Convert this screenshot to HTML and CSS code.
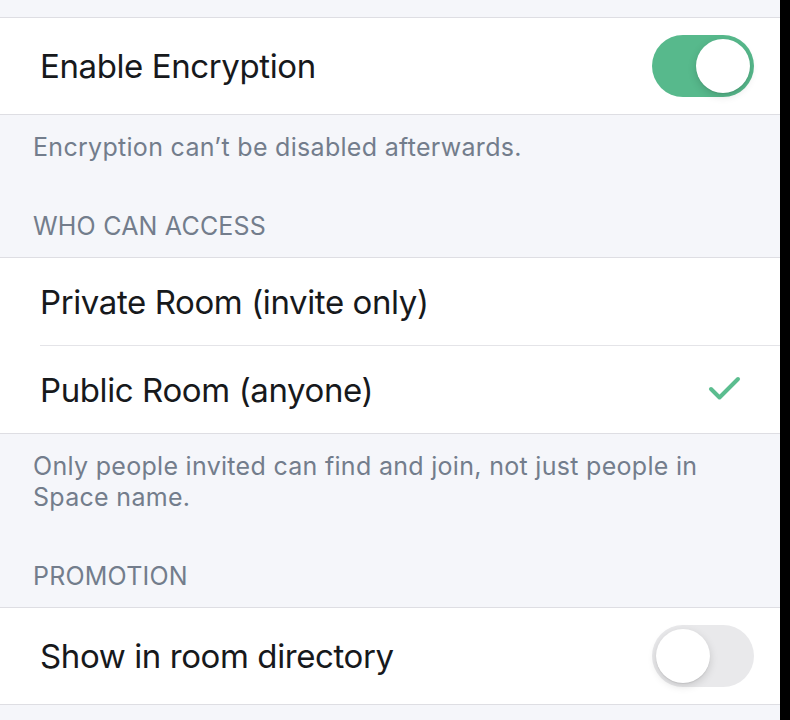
FILE: index.html
```html
<!DOCTYPE html>
<html>
<head>
<meta charset="utf-8">
<link rel="stylesheet" href="styles.css">
</head>
<body>
<div class="page">
  <div class="top-gap"></div>
  <section class="group">
    <div class="row row-tall">
      <span class="label">Enable Encryption</span>
      <span class="switch on"><span class="knob"></span></span>
    </div>
  </section>
  <p class="footer">Encryption can’t be disabled afterwards.</p>
  <h2 class="header">WHO CAN ACCESS</h2>
  <section class="group">
    <div class="row row-short">
      <span class="label">Private Room (invite only)</span>
    </div>
    <div class="sep"></div>
    <div class="row row-short">
      <span class="label">Public Room (anyone)</span>
      <svg class="check" width="34" height="28" viewBox="0 0 34 28"><path d="M3 13 L11.5 21.5 L30 3" fill="none" stroke="#5bbd8f" stroke-width="4" stroke-linecap="round" stroke-linejoin="round"/></svg>
    </div>
  </section>
  <p class="footer">Only people invited can find and join, not just people in Space name.</p>
  <h2 class="header">PROMOTION</h2>
  <section class="group">
    <div class="row row-tall">
      <span class="label">Show in room directory</span>
      <span class="switch off"><span class="knob"></span></span>
    </div>
  </section>
</div>
</body>
</html>
```

FILE: styles.css
```css
html, body {
  margin: 0;
  padding: 0;
  background: #000;
}
.page {
  width: 780px;
  height: 720px;
  background: #f5f6fa;
  overflow: hidden;
  font-family: Inter, "Liberation Sans", sans-serif;
}
.top-gap {
  height: 17px;
}
.group {
  background: #fff;
  border-top: 1px solid #dedee3;
  border-bottom: 1px solid #dedee3;
}
.row {
  display: flex;
  align-items: center;
  justify-content: space-between;
  padding: 0 26px 0 40px;
  box-sizing: border-box;
}
.row-tall {
  height: 96px;
}
.row-short {
  height: 87px;
}
.sep {
  height: 1px;
  margin-left: 40px;
  background: #e4e4e8;
}
.label {
  font-size: 33px;
  color: #17191c;
  letter-spacing: -0.4px;
}
.footer {
  margin: 0;
  padding: 17px 60px 0 33px;
  font-size: 25px;
  line-height: 31px;
  color: #737d8c;
  letter-spacing: 0.3px;
}
.header {
  margin: 48px 0 0;
  padding: 0 33px 15px;
  font-size: 25px;
  line-height: 31px;
  font-weight: 400;
  color: #737d8c;
  letter-spacing: 0.2px;
}
.switch {
  width: 102px;
  height: 62px;
  border-radius: 31px;
  box-sizing: border-box;
  padding: 4px;
  display: flex;
}
.switch.on {
  background: #57b98c;
  justify-content: flex-end;
}
.switch.off {
  background: #e9e9eb;
  justify-content: flex-start;
}
.knob {
  width: 54px;
  height: 54px;
  border-radius: 50%;
  background: #fff;
  box-shadow: 0 3px 8px rgba(0,0,0,0.15), 0 1px 1px rgba(0,0,0,0.08);
}
.check {
  margin-right: 12px;
  display: block;
}
```
